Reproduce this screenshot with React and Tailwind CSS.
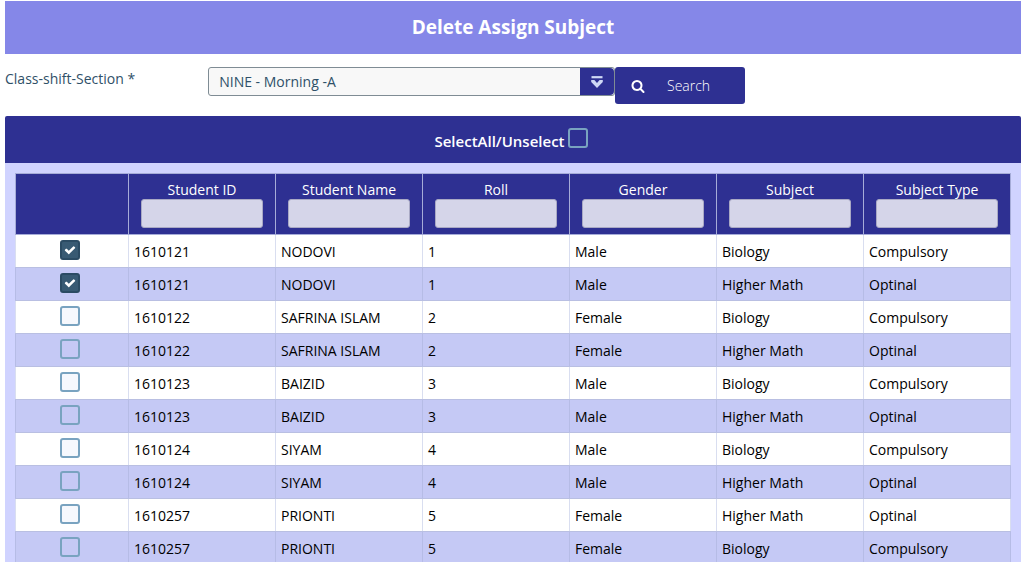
import { useState } from "react";

const columns = ["Student ID", "Student Name", "Roll", "Gender", "Subject", "Subject Type"];

const rows = [
  ["1610121", "NODOVI", "1", "Male", "Biology", "Compulsory"],
  ["1610121", "NODOVI", "1", "Male", "Higher Math", "Optinal"],
  ["1610122", "SAFRINA ISLAM", "2", "Female", "Biology", "Compulsory"],
  ["1610122", "SAFRINA ISLAM", "2", "Female", "Higher Math", "Optinal"],
  ["1610123", "BAIZID", "3", "Male", "Biology", "Compulsory"],
  ["1610123", "BAIZID", "3", "Male", "Higher Math", "Optinal"],
  ["1610124", "SIYAM", "4", "Male", "Biology", "Compulsory"],
  ["1610124", "SIYAM", "4", "Male", "Higher Math", "Optinal"],
  ["1610257", "PRIONTI", "5", "Female", "Higher Math", "Optinal"],
  ["1610257", "PRIONTI", "5", "Female", "Biology", "Compulsory"],
];

function CheckIcon() {
  return (
    <svg
      viewBox="0 0 1792 1792"
      fill="currentColor"
      className="pointer-events-none z-10 col-start-1 row-start-1 size-3 text-white"
      aria-hidden="true"
    >
      <path d="M1671 566q0 40-28 68l-724 724-136 136q-28 28-68 28t-68-28l-136-136-362-362q-28-28-28-68t28-68l136-136q28-28 68-28t68 28l294 295 656-657q28-28 68-28t68 28l136 136q28 28 28 68z" />
    </svg>
  );
}

function SearchIcon() {
  return (
    <svg viewBox="0 0 1792 1792" fill="currentColor" className="size-3.5" aria-hidden="true">
      <path d="M1216 832q0-185-131.5-316.5t-316.5-131.5-316.5 131.5-131.5 316.5 131.5 316.5 316.5 131.5 316.5-131.5 131.5-316.5zm512 832q0 52-38 90t-90 38q-54 0-90-38l-343-342q-179 124-399 124-143 0-273.5-55.5t-225-150-150-225-55.5-273.5 55.5-273.5 150-225 225-150 273.5-55.5 273.5 55.5 225 150 150 225 55.5 273.5q0 220-124 399l343 343q37 37 37 90z" />
    </svg>
  );
}

function DropIcon() {
  return (
    <svg viewBox="0 0 12 12" className="size-3" aria-hidden="true">
      <path d="M0.5 1.2H11.5" stroke="#cfd8f5" strokeWidth="2.2" />
      <path d="M0.2 4H3.4L6 7L8.6 4H11.8V6L6 12L0.2 6Z" fill="#cfd8f5" />
    </svg>
  );
}

function CheckBox({ checked, onChange, label, id, fill }) {
  return (
    <span className="grid size-5 shrink-0 place-items-center">
      <input
        id={id}
        type="checkbox"
        aria-label={label}
        checked={checked}
        onChange={onChange}
        className={`col-start-1 row-start-1 size-5 appearance-none rounded-[3px] border-2 border-[#79a3c0] checked:border-[#2b4b63] checked:bg-[#385a73] ${fill}`}
      />
      {checked && <CheckIcon />}
    </span>
  );
}

export default function App() {
  const [selected, setSelected] = useState(rows.map((_, i) => i < 2));
  const all = selected.every(Boolean);

  return (
    <main className="h-screen overflow-y-auto bg-white pt-px pr-0.5 pl-[5px] font-['Open_Sans',sans-serif] text-sm text-black [scrollbar-width:none]">
      <h1 className="flex h-[53px] items-center justify-center bg-[#8587e8] text-[19px] font-bold text-white">
        Delete Assign Subject
      </h1>

      <form className="flex h-[62px] items-start pt-[13px]" onSubmit={(e) => e.preventDefault()}>
        <label htmlFor="section" className="w-1/5 pt-0.5 text-[#2f5068]">
          Class-shift-Section *
        </label>
        <div className="grid w-2/5 grid-cols-[1fr_35px]">
          <select
            id="section"
            className="col-span-2 col-start-1 row-start-1 h-[29px] w-full appearance-none rounded-[3px] border border-[#7f8c94] bg-[#f8f8f8] px-2.5 font-medium text-[#2f5068]"
          >
            <option>NINE - Morning -A</option>
          </select>
          <span className="pointer-events-none z-10 col-start-2 row-start-1 my-px mr-px flex items-center justify-center rounded-r-sm bg-[#2e3092]">
            <DropIcon />
          </span>
        </div>
        <button
          type="submit"
          className="flex h-[37px] w-[130px] items-center rounded-[3px] bg-[#2e3092] pl-4 text-white"
        >
          <SearchIcon />
          <span className="flex-1 pr-3 text-center font-light">Search</span>
        </button>
      </form>

      <section>
        <div className="flex h-[47px] items-center justify-center rounded-t-xs bg-[#2e3092] text-[15px] font-semibold text-white">
          <label htmlFor="all" className="pt-1 pr-[3px]">SelectAll/Unselect</label>
          <span className="pr-1 pb-1">
            <CheckBox
              id="all"
              checked={all}
              onChange={() => setSelected(rows.map(() => !all))}
              fill="bg-transparent"
            />
          </span>
        </div>

        <div className="bg-[#d0d3ff] px-2.5 pt-2.5 pb-2.5">
          <table className="w-full table-fixed border-collapse">
            <thead>
              <tr className="h-[61px] bg-[#2e3092] text-white">
                <th scope="col" aria-label="Select" className="w-[113px] border border-[#a6acd8]" />
                {columns.map((name) => (
                  <th key={name} scope="col" className="border border-[#a6acd8] px-3 py-1.5 align-top font-normal">
                    <label className="block leading-[19px]">
                      {name}
                      <input
                        type="text"
                        className="block h-[29px] w-full rounded-[3px] border border-[#a9a9c4] bg-[#d5d5e9] px-1 text-black"
                      />
                    </label>
                  </th>
                ))}
              </tr>
            </thead>
            <tbody>
              {rows.map((row, i) => (
                <tr key={i} className="group h-[33px] odd:bg-white even:bg-[#c5c9f5]">
                  <td className="border border-y-[#b9bfe2] pr-1 pb-0.5 group-odd:border-x-[#d9def0] group-even:border-x-[#b6bce6]">
                    <div className="flex justify-center">
                      <CheckBox
                        label={`Select ${row[1]} ${row[4]}`}
                        checked={selected[i]}
                        onChange={() => setSelected(selected.map((v, j) => (j === i ? !v : v)))}
                        fill={i % 2 ? "bg-transparent" : "bg-[#f6f8fd]"}
                      />
                    </div>
                  </td>
                  {row.map((cell, j) => (
                    <td
                      key={j}
                      className="border border-y-[#b9bfe2] px-[5px] pt-0.5 leading-5 group-odd:border-x-[#d9def0] group-even:border-x-[#b6bce6]"
                    >
                      {cell}
                    </td>
                  ))}
                </tr>
              ))}
            </tbody>
          </table>
        </div>
      </section>
    </main>
  );
}
